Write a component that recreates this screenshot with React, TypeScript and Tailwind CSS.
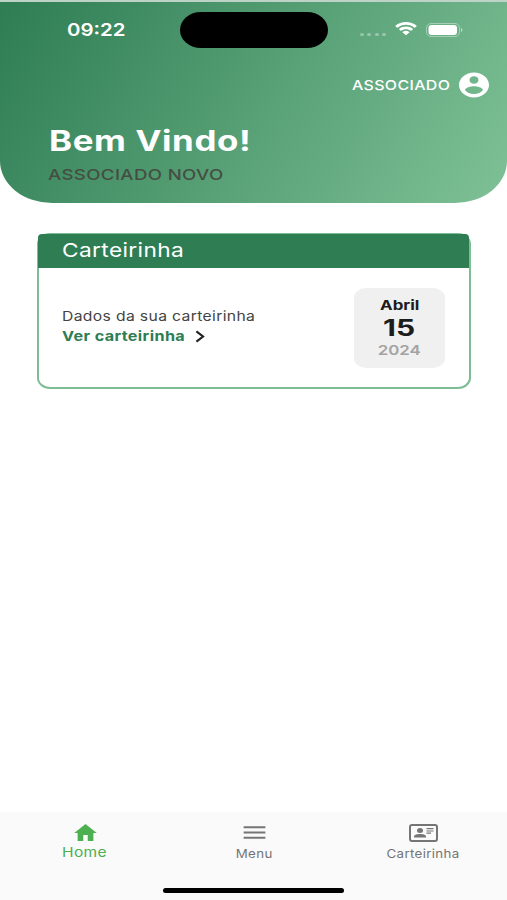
import { ReactNode, useState } from "react";
import { MdHome, MdMenu } from "react-icons/md";

function StatusBar() {
  return (
    <div className="flex h-[46px] items-end">
      <div className="mb-[8px] ml-[67px] w-[113px] text-[17.5px] leading-[20px] font-semibold">
        <span className="inline-block origin-left scale-x-[1.165]">09:22</span>
      </div>
      <div className="mb-[0.5px] h-[35.5px] w-[148px] rounded-[21px/18px] bg-black" />
      <div className="mb-[8px] ml-8 flex h-5 items-center">
        <div className="mt-[8px] flex gap-[3.3px] opacity-35">
          <i className="h-[3px] w-[4px] rounded-full bg-white" />
          <i className="h-[3px] w-[4px] rounded-full bg-white" />
          <i className="h-[3px] w-[4px] rounded-full bg-white" />
          <i className="h-[3px] w-[4px] rounded-full bg-white" />
        </div>
        <svg
          className="-mt-[2px] ml-[9px] h-[14px] w-[22px]"
          viewBox="0 0 17 12"
          preserveAspectRatio="none"
          fill="white"
        >
          <path d="M8.5 2.4c2.5 0 4.8 1 6.5 2.5.1.1.3.1.4 0l1.3-1.2c.1-.1.1-.4 0-.5C12.1-1 4.9-1 .3 3.2c-.1.1-.1.4 0 .5l1.3 1.2c.1.1.3.1.4 0C3.7 3.4 6 2.4 8.5 2.4z" />
          <path d="M8.5 6.3c1.4 0 2.7.5 3.7 1.3.1.1.3.1.4 0l1.3-1.3c.1-.1.1-.3 0-.4-3-2.7-7.7-2.7-10.8 0-.1.1-.1.3 0 .4l1.3 1.3c.1.1.3.1.4 0 1-.8 2.3-1.3 3.7-1.3z" />
          <path d="M11.1 8.9c.1-.1.1-.3 0-.4-1.5-1.2-3.7-1.2-5.2 0-.1.1-.1.3 0 .4l2.4 2.3c.1.1.3.1.4 0z" />
        </svg>
        <svg
          className="-mt-[1px] ml-[9px] h-[14px] w-[37px]"
          viewBox="0 0 37 14"
          fill="none"
        >
          <rect x="0.5" y="0.5" width="33" height="13" rx="4.5" stroke="white" strokeOpacity="0.4" />
          <rect x="2.5" y="2" width="28.5" height="10" rx="3" fill="white" />
          <path d="M35 5v4c1-.4 1.5-1.1 1.5-2S36 5.4 35 5z" fill="white" fillOpacity="0.5" />
        </svg>
      </div>
    </div>
  );
}

function Header() {
  return (
    <header className="h-[203px] rounded-b-[52px_42px] border-t-2 border-[#bcd3c6] bg-[linear-gradient(121deg,#2e7d53_0%,#7fc197_100%)] bg-clip-padding text-white">
      <StatusBar />
      <div className="mt-[20px] flex h-[34px] items-center justify-end pr-[15px]">
        <span className="mt-px inline-block origin-right scale-x-[1.18] text-[13.5px] font-medium tracking-[0.3px]">
          ASSOCIADO
        </span>
        <svg
          className="ml-[6px] h-[30px] w-[36px]"
          viewBox="0 0 24 24"
          preserveAspectRatio="none"
          fill="currentColor"
        >
          <path d="M12 2C6.48 2 2 6.48 2 12s4.48 10 10 10 10-4.48 10-10S17.52 2 12 2zm0 3c1.66 0 3 1.34 3 3s-1.34 3-3 3-3-1.34-3-3 1.34-3 3-3zm0 14.2c-2.5 0-4.71-1.28-6-3.22.03-1.99 4-3.08 6-3.08 1.99 0 5.97 1.09 6 3.08-1.29 1.94-3.5 3.22-6 3.22z" />
        </svg>
      </div>
      <div className="mt-[23px] ml-[49px]">
        <h1 className="w-fit origin-left scale-x-[1.245] text-[28px] leading-8 font-bold tracking-[0.5px]">
          Bem Vindo!
        </h1>
        <p className="mt-[8px] -ml-px w-fit origin-left scale-x-[1.24] text-[15px] leading-5 font-medium tracking-[0.3px] text-[#454d43]">
          ASSOCIADO NOVO
        </p>
      </div>
    </header>
  );
}

function CarteirinhaCard() {
  return (
    <section className="mt-[30px] mr-9 ml-[37px] h-[156px] rounded-[13px/11px] border-2 border-[#7dbd95] bg-white">
      <div className="-mt-px -ml-px flex h-[34px] items-center rounded-t-[4px] bg-[#2e7d53] pt-px pl-[24px] text-white">
        <h2 className="origin-left scale-x-[1.195] text-[19px] tracking-[0.3px]">
          Carteirinha
        </h2>
      </div>
      <div className="flex justify-between pt-[20px] pr-6 pl-[23px]">
        <div className="pt-[18px]">
          <p className="w-fit origin-left scale-x-[1.163] text-[13.5px] leading-5 tracking-[0.3px] text-[#444]">
            Dados da sua carteirinha
          </p>
          <button className="flex items-center text-[13.5px] leading-5 font-bold tracking-[0.3px] text-[#2e7d53]">
            <span className="w-[133px] text-left">
              <span className="inline-block origin-left scale-x-[1.2]">
                Ver carteirinha
              </span>
            </span>
            <svg className="h-[13px] w-[10px]" viewBox="0 0 9 12" fill="none">
              <path d="M1.2 1.2 7.3 6l-6.1 4.8" stroke="#222" strokeWidth="2" />
            </svg>
          </button>
        </div>
        <div className="flex h-[80px] w-[91px] flex-col items-center rounded-[12px/10px] bg-[#f0f0f0] pt-[8px] font-bold text-[#1c1c1c]">
          <span className="scale-x-[1.25] text-[13.5px] leading-[18px]">Abril</span>
          <span className="scale-x-[1.33] text-[22.5px] leading-[28px]">15</span>
          <span className="scale-x-[1.25] text-[13.5px] leading-[16px] font-semibold text-[#a3a3a3]">
            2024
          </span>
        </div>
      </div>
    </section>
  );
}

type TabProps = {
  label: string;
  active: boolean;
  onClick: () => void;
  children: ReactNode;
};

function Tab({ label, active, onClick, children }: TabProps) {
  return (
    <button
      onClick={onClick}
      className={`flex flex-1 flex-col items-center pt-[6px] pl-px ${
        active ? "text-[#4caf50]" : "text-[#757575]"
      }`}
    >
      <span className="flex h-[28px] items-center">{children}</span>
      <span
        className={`leading-4 tracking-[0.3px] ${
          active
            ? "-mt-[2px] scale-x-[1.15] text-[13.5px]"
            : "scale-x-[1.14] text-[11.7px]"
        }`}
      >
        {label}
      </span>
    </button>
  );
}

export default function App() {
  const [tab, setTab] = useState("home");

  return (
    <div className="flex h-[900px] w-[507px] flex-col overflow-hidden bg-white font-['Inter',sans-serif]">
      <Header />
      <CarteirinhaCard />

      <nav className="mt-auto flex h-[88px] flex-col bg-[#fafafa]">
        <div className="flex">
          <Tab label="Home" active={tab === "home"} onClick={() => setTab("home")}>
            <MdHome className="mt-px h-[24px] w-[27px]" preserveAspectRatio="none" />
          </Tab>
          <Tab label="Menu" active={tab === "menu"} onClick={() => setTab("menu")}>
            <MdMenu className="h-[25px] w-[29px]" preserveAspectRatio="none" />
          </Tab>
          <Tab label="Carteirinha" active={tab === "card"} onClick={() => setTab("card")}>
            <svg className="mt-px h-[18px] w-[29px]" viewBox="0 0 29 18" fill="none">
              <rect x="1" y="1" width="27" height="16" rx="2" stroke="currentColor" strokeWidth="2" />
              <ellipse cx="11" cy="6.5" rx="3" ry="2.5" fill="currentColor" />
              <path d="M5 13.5v-1c0-1.8 3.5-2.5 6-2.5s6 .7 6 2.5v1z" fill="currentColor" />
              <path d="M17.5 4.7h7M17.5 7h7M17.5 9.2h4.5" stroke="currentColor" strokeWidth="1.2" />
            </svg>
          </Tab>
        </div>
        <div className="mx-auto mt-auto mb-[7px] h-[5px] w-[181px] rounded-full bg-black" />
      </nav>
    </div>
  );
}
